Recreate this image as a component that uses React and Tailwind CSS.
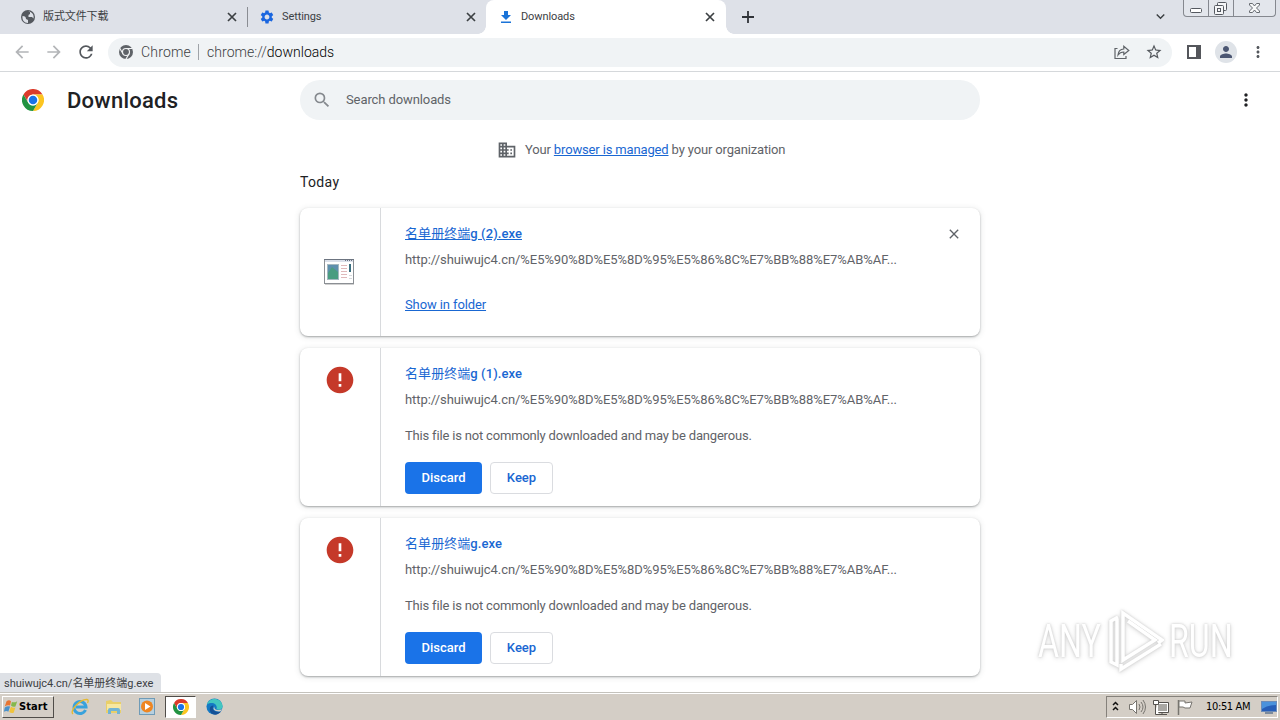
import { MdArrowBack, MdArrowForward, MdRefresh, MdSearch, MdMoreVert, MdStarBorder, MdPerson, MdSettings, MdPublic, MdClose, MdAdd, MdError, MdBusiness, MdKeyboardArrowDown } from "react-icons/md";

const FILE_URL = "http://shuiwujc4.cn/%E5%90%8D%E5%8D%95%E5%86%8C%E7%BB%88%E7%AB%AF...";

const downloads = [
  { id: 1, name: "名单册终端", suffix: "g (2).exe", safe: true },
  { id: 2, name: "名单册终端", suffix: "g (1).exe", safe: false },
  { id: 3, name: "名单册终端", suffix: "g.exe", safe: false },
];

function ChromeLogo({ size }) {
  return (
    <svg width={size} height={size} viewBox="0 0 48 48" className="shrink-0">
      <circle cx="24" cy="24" r="24" fill="#fff" />
      <path d="M3.2 12A24 24 0 0 1 44.8 12H24A12 12 0 0 0 13.6 30Z" fill="#db3b2b" />
      <path d="M44.8 12A24 24 0 0 1 24 48L34.4 30A12 12 0 0 0 24 12Z" fill="#fcc521" />
      <path d="M24 48A24 24 0 0 1 3.2 12L13.6 30A12 12 0 0 0 34.4 30Z" fill="#229342" />
      <circle cx="24" cy="24" r="12" fill="#fff" />
      <circle cx="24" cy="24" r="9.3" fill="#1a73e8" />
    </svg>
  );
}

function ChromeMono() {
  return (
    <svg width="14" height="14" viewBox="0 0 48 48" className="shrink-0">
      <circle cx="24" cy="24" r="24" fill="#5f6368" />
      <circle cx="24" cy="24" r="12" fill="none" stroke="#f1f3f4" strokeWidth="4" />
      <path d="M24 12H46M34.4 30L23 50M13.6 30L2.5 11" stroke="#f1f3f4" strokeWidth="4" />
    </svg>
  );
}

function ExeIcon() {
  return (
    <svg width="32" height="28" viewBox="0 0 32 28">
      <rect x="1.5" y="1.5" width="29" height="24" fill="#fff" stroke="#8b8f94" />
      <path d="M1 1.5H31" stroke="#6c7480" />
      <path d="M2 3H30" stroke="#dbe0ea" strokeWidth="2" />
      <path d="M22 2.5H30" stroke="#6b7484" strokeDasharray="1 1" />
      <rect x="4.5" y="6.5" width="11" height="15" fill="#5d8fae" stroke="#a5b8c0" />
      <path d="M5 15L9 9L15 14V21H5Z" fill="#4a9d81" />
      <path d="M18 7.5H24M18 10.5H24M18 13.5H24M18 16.5H24M18 19.5H24" stroke="#dfb9bb" />
      <path d="M27 6V14" stroke="#3b6f80" strokeWidth="2" />
      <path d="M26 17.5H29M26 20.5H29" stroke="#d5d8dc" />
      <path d="M2 26.5H31" stroke="#d0d0d0" />
    </svg>
  );
}

function TabClose() {
  return (
    <svg width="14" height="14" viewBox="0 0 14 14" fill="none" stroke="#3c4043" strokeWidth="1.7">
      <path d="M3 3L11 11M11 3L3 11" />
    </svg>
  );
}

function Tab({ icon, title, active }) {
  return (
    <div className={active ? "relative flex h-[34px] w-60 items-center rounded-t-lg bg-white pr-[9px] pl-3" : "relative flex h-[34px] w-[239px] items-center pr-2 pl-3"}>
      {active && (
        <>
          <div className="absolute bottom-0 -left-2 size-2 bg-[radial-gradient(circle_at_0_0,#dee1e8_7.5px,#fff_8px)]" />
          <div className="absolute -right-2 bottom-0 size-2 bg-[radial-gradient(circle_at_100%_0,#dee1e8_7.5px,#fff_8px)]" />
        </>
      )}
      {icon}
      <span className="ml-[7px] flex-1 pt-px text-[11px] tracking-[-0.1px] whitespace-nowrap text-[#3c4043]">{title}</span>
      <TabClose />
    </div>
  );
}

function GlobeIcon() {
  return (
    <svg width="16" height="16" viewBox="0 0 16 16">
      <circle cx="8" cy="8" r="7" fill="#54585e" />
      <path d="M2.500 7C5 7 6 8 6 10L8 11V14C4 14 2 11 2.500 7ZM7 2.500H10V5L8.500 6V8H12L13.500 9.500C14.500 5 11 1.800 7 2.500Z" fill="#dee1e8" />
    </svg>
  );
}

function TabStrip() {
  return (
    <div className="flex h-[34px] bg-[#dee1e8]">
      <div className="flex w-[486px] pl-2">
        <Tab icon={<GlobeIcon />} title="版式文件下载" />
        <div className="mt-[7px] h-5 w-px bg-[#8a8d93]" />
        <div className="-ml-px flex-1">
          <Tab icon={<MdSettings size={16} className="text-[#1a66e0]" />} title="Settings" />
        </div>
      </div>
      <Tab
        active
        icon={<svg width="16" height="16" viewBox="0 0 16 16" fill="#1a73d8"><path d="M6 2H10V6H13L8 11L3 6H6ZM3 12.500H13V14H3Z" /></svg>}
        title="Downloads"
      />
      <svg width="14" height="14" className="mt-[10px] ml-[15px]"><path d="M7 1V13M1 7H13" stroke="#303338" strokeWidth="1.8" /></svg>
      <div className="flex-1" />
      <MdKeyboardArrowDown size={17} className="mt-2 mr-[14px] text-[#3c4043]" />
      <div className="mr-1 flex h-[17px] w-[93px] rounded-b border border-t-0 border-[#85888f] bg-[#e3e6ec]">
        <div className="w-[25px] border-r border-[#85888f]">
          <svg width="24" height="16"><rect x="6.5" y="8.5" width="11" height="4" rx="1" fill="#fff" stroke="#555960" /></svg>
        </div>
        <div className="w-[25px] border-r border-[#85888f]">
          <svg width="24" height="16" fill="#f5f6f8" stroke="#555960">
            <rect x="8.5" y="2.5" width="9" height="8" rx="1" />
            <rect x="5.5" y="5.5" width="9" height="9" rx="1" />
            <rect x="8.5" y="8.5" width="3" height="3" />
          </svg>
        </div>
        <svg width="41" height="16"><path d="M15.5 3.500H18.500L20.500 6L22.500 3.500H25.500V5L22.500 8L25.500 11V12.500H22.500L20.500 10L18.500 12.500H15.500V11L18.500 8L15.500 5Z" fill="#f8f9fa" stroke="#666a70" /></svg>
      </div>
    </div>
  );
}

function Toolbar() {
  return (
    <div className="flex h-[38px] items-center border-b border-[#d5d8db] bg-white px-3 pb-px text-[#54585d]">
      <MdArrowBack size={20} className="text-[#b3b5b8]" />
      <MdArrowForward size={20} className="ml-3 text-[#b3b5b8]" />
      <MdRefresh size={20} className="ml-3" />
      <div className="ml-3 flex h-[29px] w-[1064px] items-center rounded-full bg-[#f0f3f5] pr-[9px] pl-[11px]">
        <ChromeMono />
        <span className="ml-2 text-sm font-light tracking-[0.2px] text-[#3c4043]">Chrome</span>
        <div className="mr-2 ml-[7px] h-4 w-px bg-[#9fa3a8]" />
        <span className="text-sm font-light tracking-[0.02px] text-[#3c4043]">chrome://<span className="text-black">downloads</span></span>
        <div className="flex-1" />
        <svg width="16" height="16" viewBox="0 0 16 16" fill="none" stroke="#5f6368" strokeWidth="1.2">
          <path d="M3.500 4.500H1V14.500H12V12" />
          <path d="M4 11C4.300 7.200 6.300 5.200 9.800 5V2.300L14.800 6.500L9.800 10.500V8C7.200 8 5.500 8.800 4 11Z" />
        </svg>
        <MdStarBorder size={18} className="ml-[15px]" />
      </div>
      <svg width="14" height="14" className="ml-[15px]"><path d="M1 1H13V13H1Z" fill="none" stroke="#54565b" strokeWidth="2" /><path d="M9 1H13V13H9Z" fill="#54565b" /></svg>
      <div className="ml-[14px] flex size-[22px] items-center justify-center rounded-full bg-[#dfe3e8]">
        <MdPerson size={18} className="text-[#4b5672]" />
      </div>
      <MdMoreVert size={18} className="ml-3 shrink-0" />
    </div>
  );
}

function DownloadCard({ item }) {
  return (
    <div className={item.safe ? "flex h-32 rounded-lg bg-white shadow-[0_1px_2px_rgba(60,64,67,0.4),0_1px_6px_rgba(60,64,67,0.15)]" : "flex h-[158px] rounded-lg bg-white shadow-[0_1px_2px_rgba(60,64,67,0.4),0_1px_6px_rgba(60,64,67,0.15)]"}>
      <div className="flex w-[81px] justify-center border-r border-[#d8dadd]">
        {item.safe ? (
          <div className="mt-[50px] -ml-0.5"><ExeIcon /></div>
        ) : (
          <MdError size={32} className="mt-4 text-[#c53929]" />
        )}
      </div>
      <div className="flex flex-1 flex-col items-start pt-4 pl-6 text-[13px] leading-5 whitespace-nowrap">
        <a className={item.safe ? "tracking-[0.07px] text-[#1967d2] underline" : "tracking-[0.07px] text-[#1967d2]"}>
          {item.name}<span className="font-medium">{item.suffix}</span>
        </a>
        <p className="mt-1.5 tracking-[-0.06px] text-[#5f6368]">{FILE_URL}</p>
        {item.safe ? (
          <a className="mt-[25px] tracking-[-0.11px] text-[#1967d2] underline">Show in folder</a>
        ) : (
          <>
            <p className="mt-4 tracking-[-0.18px] text-[#5f6368]">This file is not commonly downloaded and may be dangerous.</p>
            <div className="mt-4 flex gap-2 font-medium">
              <button className="h-8 w-[77px] rounded bg-[#1a73e8] text-white">Discard</button>
              <button className="h-8 w-[63px] rounded border border-[#dadce0] text-[#1967d2]">Keep</button>
            </div>
          </>
        )}
      </div>
      {item.safe && <MdClose size={16} className="mt-[18px] mr-[18px] text-[#5f6368]" />}
    </div>
  );
}

function Watermark() {
  return (
    <div className="absolute top-[609px] left-[1038px] flex h-16 w-[195px] items-center justify-between text-white [filter:drop-shadow(0_0_1px_#ccc)_drop-shadow(0_1px_2px_#ddd)]">
      <span className="w-16 origin-left scale-x-[0.7] text-[46px] leading-none">ANY</span>
      <svg width="56" height="64" viewBox="0 0 56 64" fill="none" stroke="#fff" strokeWidth="3.5" className="absolute left-[70px]">
        <path d="M15 43V4L54 31L50 34" />
        <path d="M20 12L47 31L15 51V43" />
        <path d="M10 8L3 12V53L9 56V10M13 55V60L53 35" />
      </svg>
      <span className="w-16 origin-left scale-x-[0.7] text-[46px] leading-none">RUN</span>
    </div>
  );
}

function Taskbar() {
  return (
    <div className="flex h-7 items-center border-t border-[#c4c2bc] bg-[#d4cec6] pl-0.5 shadow-[inset_0_1px_0_#fff]">
      <div className="flex h-[22px] w-[52px] items-center border border-t-white border-r-[#504d49] border-b-[#504d49] border-l-white">
        <svg width="16" height="17" viewBox="0 0 18 18" className="shrink-0">
          <path d="M4 3Q7 1 9 3L8 8Q5 7 2 9Z" fill="#e87532" />
          <path d="M10 4Q13 5 16 3L14 9Q11 10 9 8Z" fill="#85b84d" />
          <path d="M2 10Q5 8 8 9L6 15Q4 13 1 15Z" fill="#4b91c9" />
          <path d="M9 9Q11 11 14 10L12 16Q9 17 7 15Z" fill="#efc33c" />
        </svg>
        <span className="pt-0.5 font-['DejaVu_Sans_Condensed','DejaVu_Sans'] text-[11px] font-bold tracking-[0.1px] text-black">Start</span>
      </div>
      <svg width="20" height="20" viewBox="0 0 20 20" className="ml-4">
        <path d="M15.500 13A6 6 0 1 1 16 10H6" fill="none" stroke="#38a2dc" strokeWidth="3" />
        <path d="M3 17C-1 14 10 2 17 2.500C19 3 18 5 17.500 6" fill="none" stroke="#e5b92f" strokeWidth="1.3" />
      </svg>
      <svg width="18" height="18" viewBox="0 0 18 18" className="ml-[15px]">
        <path d="M1 3L6 2L8 4H16V15H1Z" fill="#e9cf69" />
        <path d="M2 6H16V12H2Z" fill="#f7e7a0" />
        <path d="M3 16V12Q3 10 5 10H13Q15 10 15 12V16H12V13H6V16Z" fill="#72b4d4" />
      </svg>
      <svg width="17" height="17" viewBox="0 0 17 17" className="ml-4">
        <rect x="0.500" y="0.500" width="15" height="16" fill="#b7d0df" stroke="#6f9bb7" />
        <circle cx="8" cy="8.500" r="6" fill="#ee8622" />
        <path d="M6 5L11.500 8.500L6 12Z" fill="#fff" />
      </svg>
      <div className="ml-[9px] flex h-[22px] w-[31px] items-center justify-center border border-t-[#504d49] border-r-white border-b-white border-l-[#504d49] bg-white">
        <ChromeLogo size={16} />
      </div>
      <svg width="17" height="17" viewBox="0 0 18 18" className="ml-[10px]">
        <circle cx="9" cy="9" r="8.500" fill="#1479c4" />
        <path d="M1 7C3-1 16-1 17.500 8C18 12 14 13 11 12C13 7 7 3 1 7Z" fill="#42c6c0" />
        <path d="M8 8C5 13 11 16 16 14C12 20 4 18 4 12Q4 8 8 8Z" fill="#155096" />
        <path d="M9 9C8 12 12 14 17 12L15.500 14C10 15 6 12 9 9Z" fill="#d4cec6" />
      </svg>
      <div className="flex-1" />
      <div className="mr-0.5 flex h-[22px] w-[172px] items-center border border-t-[#85817b] border-r-white border-b-white border-l-[#85817b]">
        <svg width="82" height="18" viewBox="0 0 82 18" className="ml-1 shrink-0">
          <path d="M2 7L4.500 4.500L7 7M2 12L4.500 9.500L7 12" fill="none" stroke="#111" strokeWidth="1.500" />
          <path d="M18.500 6.500H21.500L25.500 2.500V15.500L21.500 11.500H18.500Z" fill="#fff" stroke="#77746f" />
          <path d="M28 6Q30 9 28 12M30 4Q34 9 30 14M32 2Q37 9 32 16" fill="none" stroke="#77746f" />
          <rect x="46.500" y="5.500" width="10" height="8" fill="#a9a7a3" stroke="#fff" />
          <path d="M45.500 4.500H57.500V14.500H45.500M51 14V16M48 16.500H56" fill="none" stroke="#55524e" />
          <path d="M42.500 2.500V6.500H47.500V2.500ZM44.500 6.500V16.500H48" fill="#fff" stroke="#55524e" />
          <path d="M67.500 2V17" stroke="#77746f" strokeWidth="1.500" />
          <path d="M68 3H74V5L81 4L79 10H74L72 9H68Z" fill="#fff" stroke="#77746f" />
        </svg>
        <span className="ml-[13px] pt-px font-['DejaVu_Sans_Condensed','DejaVu_Sans'] text-[11px] tracking-[-0.35px] whitespace-nowrap text-black">10:51 AM</span>
        <svg width="16" height="14" className="ml-auto shrink-0"><rect x="0.500" y="1.500" width="15" height="10" fill="#275eb8" stroke="#6d8cb8" /><path d="M1 2H15V5Q7 5 1 9Z" fill="#4b92dc" /><path d="M4 13H12" stroke="#244874" /></svg>
      </div>
    </div>
  );
}

export default function App() {
  return (
    <div className="relative flex h-[720px] w-[1280px] flex-col overflow-hidden bg-white font-['Roboto','Noto_Sans_CJK_SC',sans-serif]">
      <TabStrip />
      <Toolbar />
      <main className="relative flex h-[620px] flex-col">
        <header className="flex h-14 shrink-0 items-center pl-[22px]">
          <ChromeLogo size={22} />
          <h1 className="ml-[23px] w-[233px] text-[22px] font-medium tracking-[0.25px] text-[#202124]">Downloads</h1>
          <div className="flex h-10 w-[680px] items-center rounded-full bg-[#f0f3f5] pl-3 text-[13px] text-[#5f6368]">
            <MdSearch size={20} className="text-[#85898e]" />
            <span className="ml-3.5 tracking-[-0.1px]">Search downloads</span>
          </div>
          <MdMoreVert size={20} className="ml-64 text-[#202124]" />
        </header>
        <div className="mx-auto w-[680px]">
          <div className="flex h-11 items-center pl-[197px] text-[13px] whitespace-nowrap text-[#5f6368]">
            <MdBusiness size={20} />
            <span className="ml-2 tracking-[-0.15px]">Your <a className="text-[#1967d2] underline">browser is managed</a> by your organization</span>
          </div>
          <h2 className="h-9 text-sm tracking-[0.35px] text-[#202124]">Today</h2>
          <div className="flex flex-col gap-3">
            {downloads.map((item) => (
              <DownloadCard key={item.id} item={item} />
            ))}
          </div>
        </div>
        <div className="absolute bottom-0 left-0 flex h-[19px] w-[161px] items-center rounded-tr bg-[#dee1e6] pt-1 pl-1 text-[11px] tracking-[-0.02px] whitespace-nowrap text-[#3c4043]">shuiwujc4.cn/名单册终端g.exe</div>
      </main>
      <Watermark />
      <Taskbar />
    </div>
  );
}
